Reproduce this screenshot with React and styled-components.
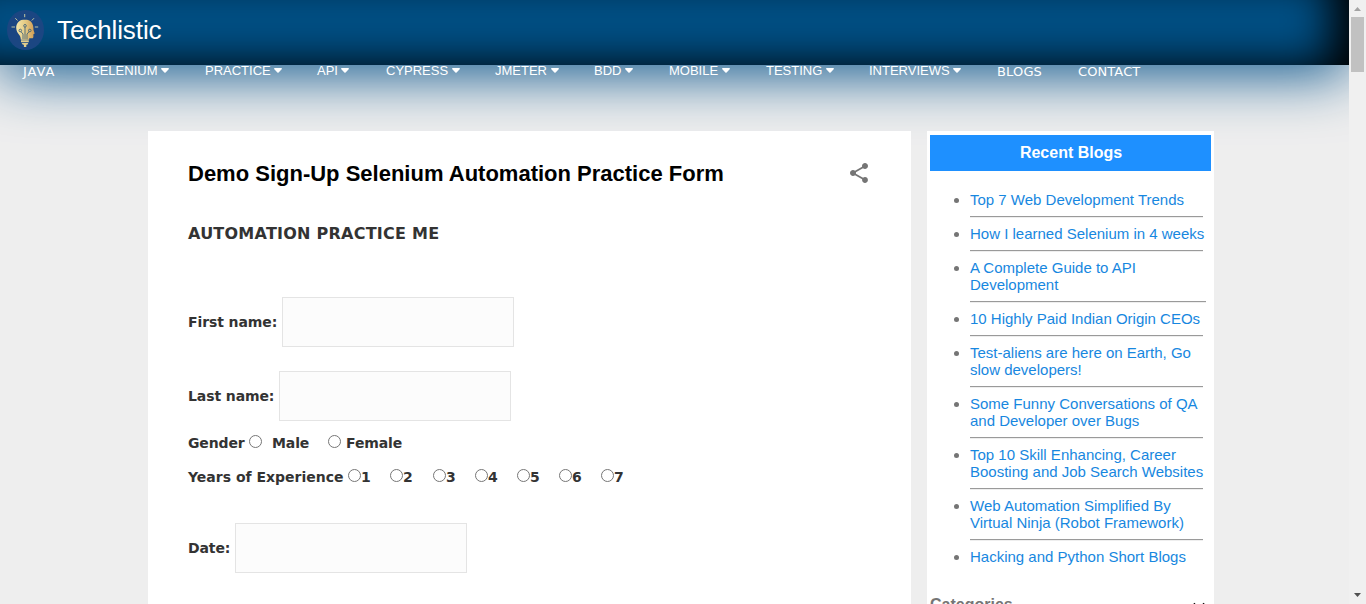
import React from "react";
import styled, { createGlobalStyle } from "styled-components";
import { MdShare } from "react-icons/md";

const Global = createGlobalStyle`
  *, *::before, *::after { box-sizing: border-box; }
  html, body { margin: 0; padding: 0; overflow: hidden; background: #eee; }
`;
const sans = `"Liberation Sans", Arial, sans-serif`;
const wide = `"DejaVu Sans", Verdana, sans-serif`;

const Window = styled.div`
  display: flex;
  width: 1366px;
  height: 604px;
  overflow: hidden;
  background: #eee;
  font-family: ${sans};
`;
const Page = styled.div`
  width: 1349px;
  height: 604px;
  overflow: hidden;
`;
const Header = styled.header`
  display: flex;
  align-items: flex-start;
  gap: 13px;
  height: 65px;
  padding: 10px 0 0 7px;
  background: #004f84;
  box-shadow: inset -30px -12px 44px -12px #000, 0 8px 60px #004f88;
`;
const SiteName = styled.h1`
  margin: 4px 0 0;
  font: 400 26px/32px ${sans};
  letter-spacing: -0.1px;
  color: #fff;
`;
const Nav = styled.nav`
  position: relative;
  display: grid;
  grid-template-columns: 68px 114px 112px 69px 109px 99px 75px 97px 103px 128px 81px 80px;
  height: 66px;
  padding-left: 23px;
`;
const NavItem = styled.a`
  display: flex;
  height: 16px;
  margin-top: ${(p) => (p.$plain ? -1 : -2)}px;
  font: 400 13px/16px ${(p) => (p.$plain ? wide : sans)};
  letter-spacing: ${(p) => p.$track || 0}px;
  white-space: nowrap;
  color: #fff;
`;
const Caret = styled.svg`
  width: 8px;
  height: 5px;
  margin: 5px 0 0 3.500px;
  fill: #fff;
`;
const Columns = styled.div`
  display: flex;
  gap: 16px;
  padding-left: 148px;
`;
const Post = styled.main`
  position: relative;
  width: 763px;
  height: 480px;
  padding: 29px 40px 0;
  background: #fff;
  font-family: ${wide};
  color: #333;
`;
const PostHead = styled.div`
  display: flex;
  justify-content: space-between;
  height: 60px;
`;
const Title = styled.h2`
  margin: 0;
  font: 700 22px/28px ${sans};
  color: #000;
`;
const Share = styled(MdShare)`
  width: 24px;
  height: 24px;
  margin: 1px 0 0;
  color: #757575;
`;
const Subtitle = styled.h3`
  height: 28px;
  margin: 0 0 49px;
  font: 700 16px/28px ${wide};
  letter-spacing: 0.240px;
`;
const Field = styled.label`
  display: flex;
  align-items: center;
  gap: 5px;
  height: 50px;
  margin-bottom: ${(p) => p.$after || 0}px;
  font: 700 14px/20px ${wide};
  letter-spacing: -0.1px;
`;
const TextInput = styled.input`
  width: 232px;
  height: 50px;
  border: 1px solid #e4e4e4;
  background: #fcfcfc;
  outline: none;
`;
const Choices = styled.div`
  display: flex;
  height: 20px;
  margin-bottom: ${(p) => p.$after}px;
  font: 700 14px/20px ${wide};
  letter-spacing: ${(p) => p.$track || 0}px;
`;
const ChoiceName = styled.span`
  width: ${(p) => p.$width}px;
  white-space: nowrap;
`;
const Choice = styled.label`
  display: flex;
  gap: ${(p) => p.$gap || 0}px;
  width: ${(p) => p.$width}px;
`;
const Radio = styled.input`
  flex: none;
  width: 13px;
  height: 13px;
  margin: 2px 0 0;
`;
const Aside = styled.aside`
  width: 287px;
  height: 480px;
  padding: 4px 3px 0;
  background: #fff;
`;
const AsideTitle = styled.h2`
  height: 36px;
  margin: 0 0 20px;
  background: #1e90ff;
  color: #fff;
  font: 700 16px/35px ${sans};
  text-align: center;
  text-indent: 1px;
`;
const BlogList = styled.ul`
  margin: 0;
  padding: 0 0 0 40px;
  color: #757575;
  font: 400 15px/17px ${sans};
`;
const Blog = styled.li`
  white-space: nowrap;
`;
const BlogLink = styled.a`
  color: #1787e0;
`;
const Rule = styled.hr`
  width: ${(p) => p.$width || 233}px;
  height: 2px;
  margin: 7.5px 0;
  border: 0;
  border-top: 1px solid #9a9a9a;
  border-bottom: 1px solid #eee;
`;
const Categories = styled.div`
  display: flex;
  justify-content: space-between;
  margin-top: 30px;
  font: 700 16px/20px ${sans};
  color: #757575;
`;
const Chevron = styled.svg`
  width: 24px;
  height: 24px;
  fill: #000;
`;
const ScrollBar = styled.div`
  display: flex;
  flex-direction: column;
  align-items: center;
  width: 17px;
  height: 604px;
  background: #f0f0f0;
`;
const Arrow = styled.i`
  width: 7px;
  height: 4px;
  margin: ${(p) => (p.$down ? "auto 0 7px" : "7px 0 6px")};
  background: ${(p) => (p.$down ? "#505050" : "#a3a3a3")};
  clip-path: ${(p) => (p.$down ? "polygon(0 0,100% 0,50% 100%)" : "polygon(50% 0,100% 100%,0 100%)")};
`;
const Thumb = styled.div`
  width: 13px;
  height: 55px;
  background: #c1c1c1;
`;

const Logo = () => (
  <svg width="37" height="40" viewBox="0 0 37 40" fill="none">
    <defs>
      <linearGradient id="gold" x1="9" x2="28" y1="0" y2="0" gradientUnits="userSpaceOnUse">
        <stop stopColor="#f5e7ab" />
        <stop offset="0.5" stopColor="#e3c983" />
        <stop offset="1" stopColor="#cf9a52" />
      </linearGradient>
    </defs>
    <ellipse cx="18.5" cy="20" rx="18.5" ry="20" fill="#1b4682" />
    <path
      fill="url(#gold)"
      d="M18 9.500c-5.300 0-8.800 3.400-8.800 8.200 0 3 1.400 5 2.900 7 1.100 1.500 1.700 2.800 1.700 5h8.400V28.300h2.900c.9 0 1.300-.6 1.300-1.500v-2.500l1.300-.8-1.200-3.500c.2-6.500-2.800-10.500-8.500-10.500z"
    />
    <path fill="#e2cd8d" d="M14 30.300h7.800v2H14zM14.600 33h6.700l-1 1.800h-1V37h-2.400v-2.200h-1z" />
    <g stroke="#3b5f78" strokeWidth="0.850">
      <path d="M18 17v12M16 29v-5l-2.200-2.500M20 29v-5l2.300-2.500" />
      <circle cx="18" cy="15.800" r="1.300" />
      <circle cx="13.300" cy="20.500" r="1.300" />
      <circle cx="22.800" cy="20.500" r="1.300" />
    </g>
    <path stroke="#d3d3a5" strokeWidth="0.900" d="M17.700 4v3.200M8.300 8.200l2.200 2.300M27 8.200l-2.200 2.300M4.500 17H8M27.800 17h3.400" />
  </svg>
);

const nav = ["JAVA", "SELENIUM", "PRACTICE", "API", "CYPRESS", "JMETER", "BDD", "MOBILE", "TESTING", "INTERVIEWS", "BLOGS", "CONTACT"];
const plain = ["JAVA", "BLOGS", "CONTACT"];
const tracking = { JAVA: 0.9, BLOGS: 0.15, CONTACT: 0.1 };
const blogs = [
  ["Top 7 Web Development Trends"],
  ["How I learned Selenium in 4 weeks"],
  ["A Complete Guide to API", "Development"],
  ["10 Highly Paid Indian Origin CEOs"],
  ["Test-aliens are here on Earth, Go", "slow developers!"],
  ["Some Funny Conversations of QA", "and Developer over Bugs"],
  ["Top 10 Skill Enhancing, Career", "Boosting and Job Search Websites"],
  ["Web Automation Simplified By", "Virtual Ninja (Robot Framework)"],
  ["Hacking and Python Short Blogs"],
];
const years = [42, 43, 42, 42, 42, 42, 42];

export default function App() {
  return (
    <Window>
      <Global />
      <Page>
        <Header>
          <Logo />
          <SiteName>Techlistic</SiteName>
        </Header>
        <Nav>
          {nav.map((n) => (
            <NavItem key={n} $plain={plain.includes(n)} $track={tracking[n]}>
              {n}
              {!plain.includes(n) && (
                <Caret viewBox="0 0 8 5">
                  <path d="M.8 0h6.400c.7 0 1 .8.500 1.300L4.600 4.500c-.3.400-.9.400-1.200 0L.3 1.300C-.2.800.1 0 .8 0z" />
                </Caret>
              )}
            </NavItem>
          ))}
        </Nav>
        <Columns>
          <Post>
            <PostHead>
              <Title>Demo Sign-Up Selenium Automation Practice Form</Title>
              <Share />
            </PostHead>
            <Subtitle>AUTOMATION PRACTICE ME</Subtitle>
            <Field $after={24}>
              First name:
              <TextInput />
            </Field>
            <Field $after={12}>
              Last name:
              <TextInput />
            </Field>
            <Choices $after={14} $track={-0.12}>
              <ChoiceName $width={61}>Gender</ChoiceName>
              <Choice $width={79} $gap={10}>
                <Radio type="radio" name="sex" />
                Male
              </Choice>
              <Choice $gap={5}>
                <Radio type="radio" name="sex" />
                Female
              </Choice>
            </Choices>
            <Choices $after={36}>
              <ChoiceName $width={160}>Years of Experience</ChoiceName>
              {years.map((w, i) => (
                <Choice key={i} $width={w}>
                  <Radio type="radio" name="exp" />
                  {i + 1}
                </Choice>
              ))}
            </Choices>
            <Field>
              Date:
              <TextInput />
            </Field>
          </Post>
          <Aside>
            <AsideTitle>Recent Blogs</AsideTitle>
            <BlogList>
              {blogs.map((lines, i) => (
                <Blog key={i}>
                  <BlogLink>
                    {lines[0]}
                    {lines[1] && <br />}
                    {lines[1]}
                  </BlogLink>
                  {i < blogs.length - 1 && <Rule $width={i === 2 ? 236 : 233} />}
                </Blog>
              ))}
            </BlogList>
            <Categories>
              Categories
              <Chevron viewBox="0 0 24 24">
                <path d="M7.410 7.840L12 12.420l4.590-4.580L18 9.250l-6 6-6-6z" />
              </Chevron>
            </Categories>
          </Aside>
        </Columns>
      </Page>
      <ScrollBar>
        <Arrow />
        <Thumb />
        <Arrow $down />
      </ScrollBar>
    </Window>
  );
}
